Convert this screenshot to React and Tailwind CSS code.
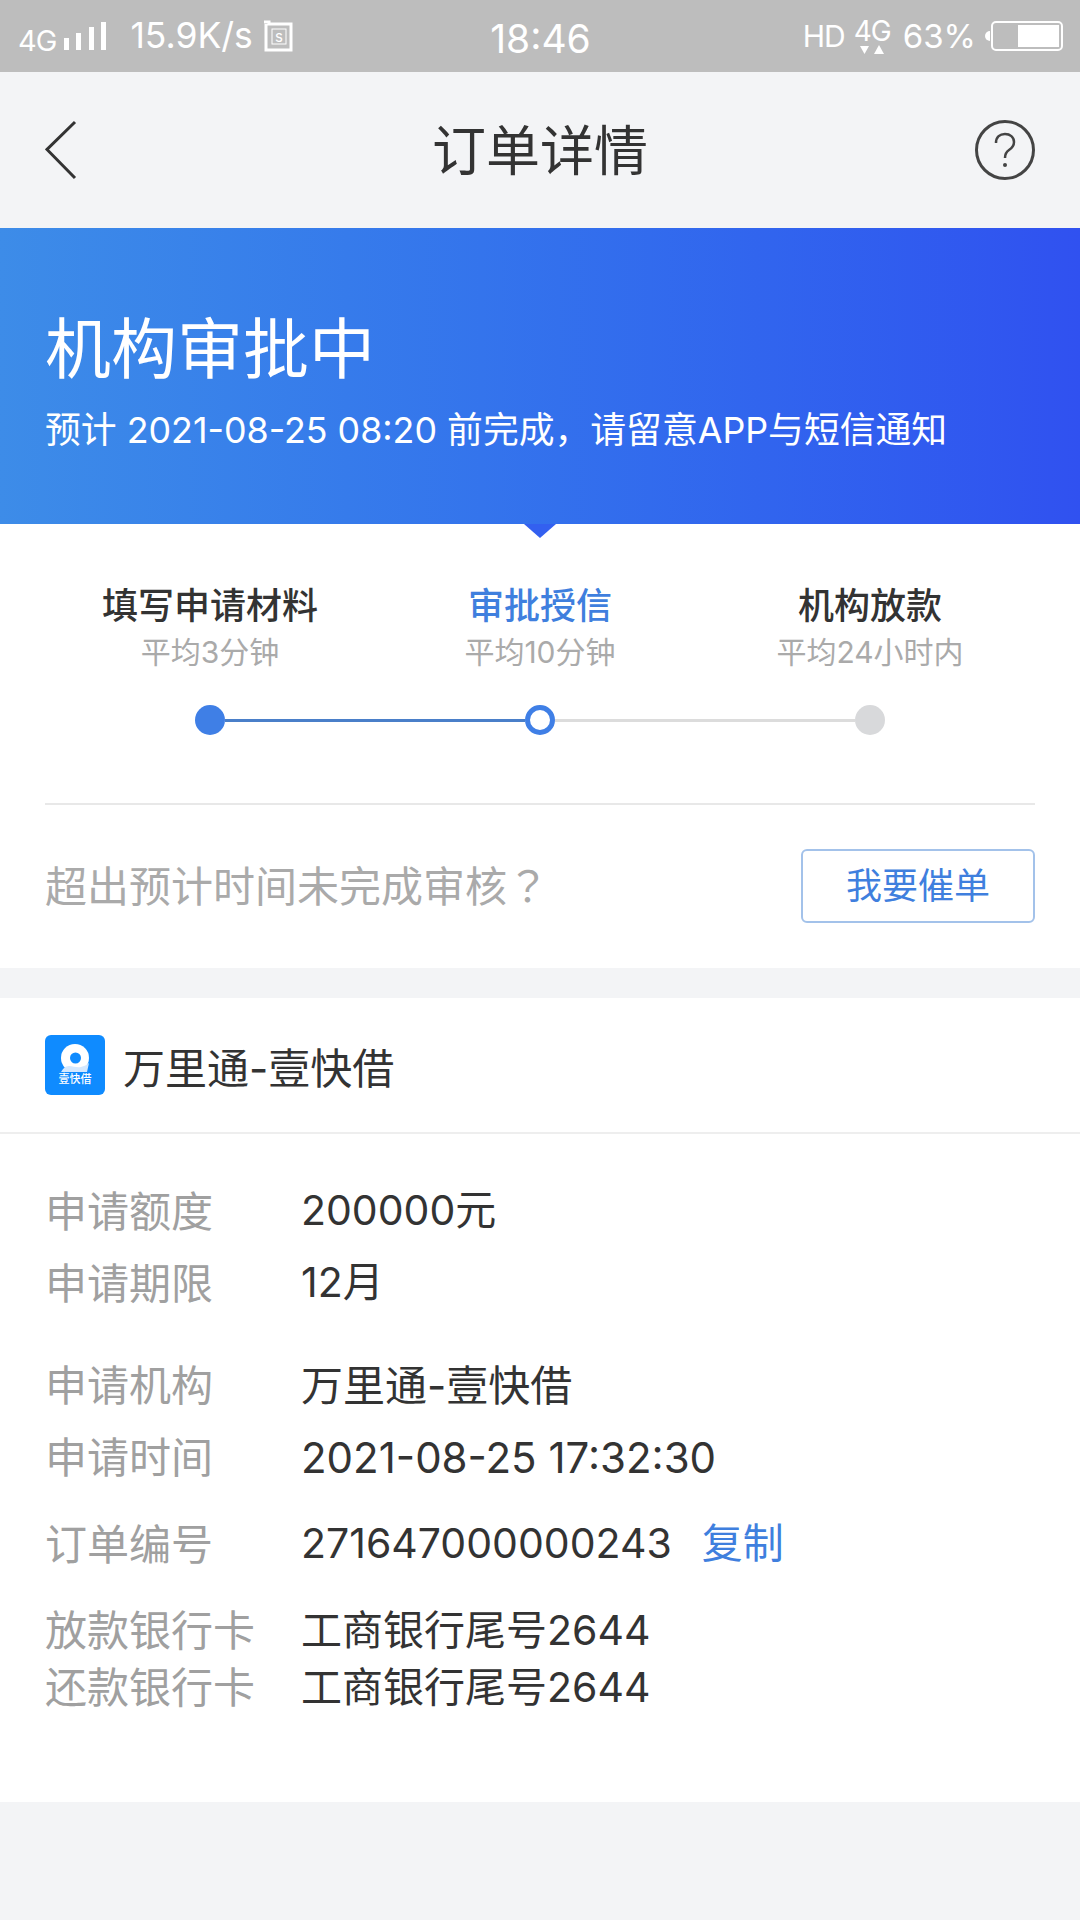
import React from "react";

const details = [
  [
    ["申请额度", "200000元", "text-[41px]"],
    ["申请期限", "12月", "text-[41px]"],
  ],
  [
    ["申请机构", "万里通-壹快借", "text-[42px]"],
    ["申请时间", "2021-08-25 17:32:30", "text-[42px]"],
  ],
];

const steps = [
  { title: "填写申请材料", time: "平均3分钟", color: "text-[#333333]" },
  { title: "审批授信", time: "平均10分钟", color: "text-[#3f7fde]" },
  { title: "机构放款", time: "平均24小时内", color: "text-[#333333]" },
];

const StatusBar = () => (
  <div className="flex h-[72px] items-center justify-between bg-[#bdbdbd] pl-[18px] pr-[17px] text-white">
    <div className="flex flex-1 items-center">
      <span className="mt-[8px] text-[29px] leading-none tracking-[-1px]">4G</span>
      <svg width="44" height="30" viewBox="0 0 44 30" className="ml-[7px]" fill="white">
        <rect x="1" y="17" width="5" height="12" />
        <rect x="13" y="12" width="5" height="17" />
        <rect x="26" y="6" width="5" height="23" />
        <rect x="38" y="1" width="5" height="28" />
      </svg>
      <span className="ml-[23px] text-[35.500px] leading-none">15.9K/s</span>
      <svg width="30" height="32" viewBox="0 0 30 32" className="ml-[10px]" fill="none" stroke="white">
        <path d="M1 2h5v2h22v26H3V4" strokeWidth="3" />
        <rect x="9" y="9" width="14" height="15" strokeWidth="1" />
        <text x="16" y="21.500" textAnchor="middle" fontSize="15" fill="white" stroke="none">s</text>
      </svg>
    </div>
    <span className="mt-[4px] text-[39px] leading-none">18:46</span>
    <div className="flex flex-1 items-center justify-end">
      <span className="text-[30px] leading-none tracking-[-1px]">HD</span>
      <div className="ml-[9px] flex w-[37px] flex-col items-center">
        <span className="text-[28px] leading-[28px] tracking-[-1px]">4G</span>
        <svg width="26" height="10" viewBox="0 0 26 10" fill="white">
          <path d="M1 1h9L5.500 9z" />
          <path d="M20 0l5 9h-10z" />
        </svg>
      </div>
      <span className="ml-[12px] text-[33px] leading-none">63%</span>
      <div className="ml-[9px] h-[10px] w-[5px] rounded-l-full bg-white" />
      <div className="ml-[1px] flex h-[30px] w-[72px] justify-end rounded-[5px] border-2 border-white p-[2px]">
        <div className="h-full w-[41px] bg-white" />
      </div>
    </div>
  </div>
);

const NavBar = () => (
  <div className="flex h-[156px] items-center justify-between bg-[#f3f4f6] px-[45px]">
    <div className="w-[60px]">
      <svg width="32" height="60" viewBox="0 0 32 60" fill="none" stroke="#333333" strokeWidth="3">
        <path d="M30 2L2 29.500 30 58" />
      </svg>
    </div>
    <span className="mt-[4px] text-[54px] leading-none text-[#333333]">订单详情</span>
    <svg width="60" height="60" viewBox="0 0 60 60" fill="none" stroke="#444444" strokeWidth="3">
      <circle cx="30" cy="30" r="28.500" />
      <path d="M21 23c0-6 4-9 9-9s9 3 9 8c0 4-2 6-5 8-3 2-4 4-4 8" strokeWidth="2.500" />
      <circle cx="30" cy="45" r="2" fill="#444444" stroke="none" />
    </svg>
  </div>
);

const Stepper = () => (
  <div className="mx-[150px] mt-[35px] flex items-center px-[45px]">
    <div className="h-[30px] w-[30px] shrink-0 rounded-full bg-[#3f7fe6]" />
    <div className="h-[3px] flex-1 bg-[#4a7fc9]" />
    <div className="h-[30px] w-[30px] shrink-0 rounded-full border-[5px] border-[#3f7fe6] bg-white" />
    <div className="h-[3px] flex-1 bg-[#dcdcdc]" />
    <div className="h-[30px] w-[30px] shrink-0 rounded-full bg-[#d8d9db]" />
  </div>
);

const Logo = () => (
  <div className="flex h-[60px] w-[60px] shrink-0 flex-col items-center rounded-[6px] bg-[#0f8bff] pt-[9px]">
    <svg width="30" height="29" viewBox="0 0 30 29" className="shrink-0">
      <circle cx="15" cy="14" r="14" fill="white" />
      <path d="M1 28c2-3 4-6 8-6 4 0 8 2 12 1 3-1 6-2 8-4l-2 9z" fill="#d3e8ff" />
      <circle cx="15.500" cy="14" r="5.500" fill="#0f8bff" />
    </svg>
    <span className="mt-[-1px] text-[11px] font-medium leading-[14px] text-white">壹快借</span>
  </div>
);

const DetailRow = ({ label, children, tall = true }) => (
  <div className={`flex items-center ${tall ? "h-[72px]" : "h-[57px]"}`}>
    <span className="w-[256px] shrink-0 text-[42px] text-[#a0a0a0]">{label}</span>
    {children}
  </div>
);

export default function App() {
  return (
    <div className="flex min-h-[1920px] w-[1080px] flex-col bg-[#f3f4f6] font-[Inter,'Noto_Sans_CJK_SC',sans-serif]">
      <StatusBar />
      <NavBar />

      <div className="relative h-[296px] bg-gradient-to-r from-[#3d8ce8] to-[#3051f0] px-[45px] pt-[88px] text-white">
        <div className="text-[66px] leading-[66px]">机构审批中</div>
        <div className="mt-[24px] text-[35.800px] leading-[48px]">
          预计 2021-08-25 08:20 前完成，请留意APP与短信通知
        </div>
        <div className="absolute left-[524px] top-full h-0 w-0 border-x-[16px] border-t-[14px] border-x-transparent border-t-[#3360f0]" />
      </div>

      <div className="h-[444px] bg-white pt-[62px]">
        <div className="grid grid-cols-3 px-[45px]">
          {steps.map((step) => (
            <div key={step.title} className="flex flex-col items-center">
              <span className={`text-[36px] font-medium leading-[40px] ${step.color}`}>
                {step.title}
              </span>
              <span className="mt-[8px] text-[30px] leading-[36px] text-[#aaaaaa]">
                {step.time}
              </span>
            </div>
          ))}
        </div>
        <Stepper />
        <div className="mx-[45px] mt-[68px] flex h-[163px] items-center justify-between border-t-2 border-[#e8e8e8]">
          <span className="mt-[-2px] text-[42px] text-[#aaaaaa]">
            超出预计时间未完成审核<span className="font-['Noto_Sans_CJK_TC']">？</span>
          </span>
          <div className="flex h-[74px] w-[234px] items-center justify-center rounded-[6px] border-2 border-[#a3c2ea] text-[36px] text-[#3f7fde]">
            我要催单
          </div>
        </div>
      </div>

      <div className="mt-[30px] h-[804px] bg-white text-[41px] text-[#333333]">
        <div className="flex h-[136px] items-center gap-[18px] border-b-2 border-[#eeeeee] px-[45px]">
          <Logo />
          <span className="mt-[6px] text-[42px]">万里通-壹快借</span>
        </div>
        <div className="px-[45px] pt-[41px]">
          {details.map((group, i) => (
            <div key={i} className={i > 0 ? "mt-[30px]" : ""}>
              {group.map(([label, value, size]) => (
                <DetailRow key={label} label={label}>
                  <span className={size}>{value}</span>
                </DetailRow>
              ))}
            </div>
          ))}
          <div className="mt-[15px]">
            <DetailRow label="订单编号">
              <span>271647000000243</span>
              <span className="ml-[30px] text-[#3f7fde]">复制</span>
            </DetailRow>
          </div>
          <div className="mt-[22px]">
            <DetailRow label="放款银行卡" tall={false}>
              <span>工商银行尾号2644</span>
            </DetailRow>
            <DetailRow label="还款银行卡" tall={false}>
              <span>工商银行尾号2644</span>
            </DetailRow>
          </div>
        </div>
      </div>
    </div>
  );
}
